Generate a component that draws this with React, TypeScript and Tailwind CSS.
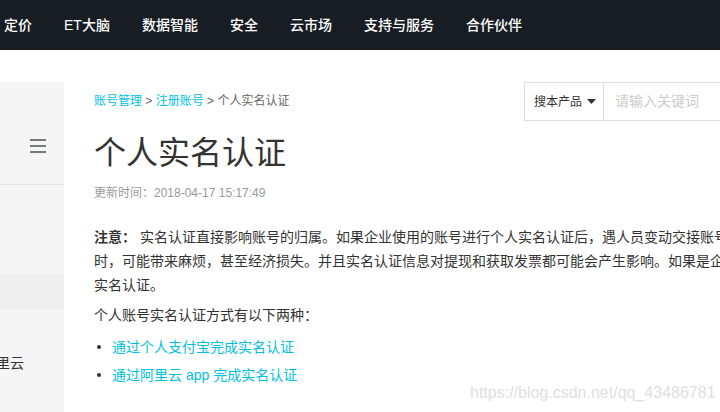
const navItems = ["定价", "ET大脑", "数据智能", "安全", "云市场", "支持与服务", "合作伙伴"];

export default function App() {
  return (
    <div className="w-[720px] h-[412px] overflow-hidden bg-white text-[#333] font-['Liberation_Sans','Noto_Sans_CJK_SC',sans-serif]">
      <header className="h-[50px] bg-[#181d24] flex items-center gap-8 pl-[4px] text-white text-[14px] font-medium whitespace-nowrap">
        {navItems.map(n => (
          <span key={n}>{n}</span>
        ))}
      </header>

      <div className="mt-8 flex h-[330px]">
        {/* 左侧菜单 */}
        <aside className="w-16 shrink-0 bg-[#f5f5f5] overflow-hidden flex flex-col">
          <div className="h-[103px] border-b border-[#e2e2e2] flex justify-end pr-[18px] pt-[57px]">
            <div className="flex flex-col gap-[4px]">
              <span className="w-4 h-[2px] bg-[#76797c]" />
              <span className="w-4 h-[2px] bg-[#76797c]" />
              <span className="w-4 h-[2px] bg-[#76797c]" />
            </div>
          </div>
          <div className="h-[88px]" />
          <div className="h-[36px] bg-[#efefef]" />
          <div className="mt-[42px] -ml-[18px] text-[14px] leading-[24px] whitespace-nowrap">阿里云</div>
        </aside>

        <main className="relative flex-1 min-w-0 overflow-hidden pl-[30px]">
          <div className="flex items-start">
            <div className="w-[430px] shrink-0 pt-[10px] text-[12px] leading-[18px] text-[#666] whitespace-nowrap">
              <span className="text-[#00c1de]">账号管理</span> &gt;{" "}
              <span className="text-[#00c1de]">注册账号</span> &gt; 个人实名认证
            </div>
            <div className="flex h-[39px] w-[260px] shrink-0 border border-[#dddddd]">
              <div className="w-[79px] shrink-0 border-r border-[#dddddd] flex items-center pl-[9px] text-[12px] text-[#333]">
                搜本产品
                <svg width="9" height="5" viewBox="0 0 9 5" className="ml-[5px]">
                  <path d="M0 0h9L4.5 5z" fill="#333" />
                </svg>
              </div>
              <input
                placeholder="请输入关键词"
                className="flex-1 min-w-0 pl-[11px] text-[14px] outline-none placeholder:text-[#cccccc]"
              />
            </div>
          </div>

          <h1 className="mt-[12px] text-[32px] leading-[40px] font-normal text-[#333]">个人实名认证</h1>
          <div className="mt-[11px] text-[12px] leading-[18px] text-[#999]">更新时间：2018-04-17 15:17:49</div>

          <p className="mt-[23px] text-[14px] leading-[24px] whitespace-nowrap">
            <b>注意：</b> 实名认证直接影响账号的归属。如果企业使用的账号进行个人实名认证后，遇人员变动交接账号
            <br />
            时，可能带来麻烦，甚至经济损失。并且实名认证信息对提现和获取发票都可能会产生影响。如果是企业用户，建议您进行企业
            <br />
            实名认证。
          </p>
          <p className="mt-[6px] text-[14px] leading-[24px]">个人账号实名认证方式有以下两种：</p>
          <ul className="mt-[8px] text-[14px] leading-[24px] text-[#00c1de]">
            <li className="flex items-center">
              <span className="w-[4px] h-[4px] rounded-full bg-[#333] ml-[3px] mr-[11px]" />
              通过个人支付宝完成实名认证
            </li>
            <li className="mt-[4px] flex items-center">
              <span className="w-[4px] h-[4px] rounded-full bg-[#333] ml-[3px] mr-[11px]" />
              通过阿里云 app 完成实名认证
            </li>
          </ul>

          <div className="absolute left-[406px] top-[302px] text-[16px] leading-[18px] text-[#e0e0e0] whitespace-nowrap">
            https://blog.csdn.net/qq_43486781
          </div>
        </main>
      </div>
    </div>
  );
}
